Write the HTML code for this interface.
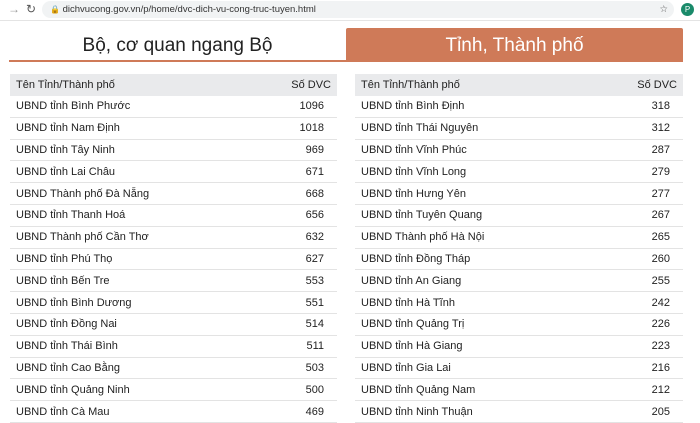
<!DOCTYPE html><html><head><meta charset="utf-8"><style>
body{margin:0;width:700px;height:420px;overflow:hidden;background:#fff;font-family:"Liberation Sans",sans-serif;}
.bar{position:absolute;left:0;top:0;width:700px;height:20px;background:#fff;border-bottom:1px solid #e4e4e4}
.addr{position:absolute;left:42px;top:1px;width:632px;height:17px;background:#f1f3f4;border-radius:9px;font-size:9.5px;color:#333;line-height:17px}
.tab{position:absolute;top:28px;height:34px;line-height:36px;text-align:center;font-size:19px}
.t1{left:9px;width:337px;color:#222;border-bottom:2px solid #cf7a58;height:32px}
.t2{left:346px;width:337px;background:#cf7a58;color:#fff;border-radius:2px 2px 0 0}
table{position:absolute;top:74px;border-collapse:collapse;font-size:11px;color:#222}
td{height:20.8px;border-bottom:1px solid #e3e3e3;padding:0 6px}
tr.h td{background:#e9eaec;border:none;height:22px}
td.n{text-align:right;padding-right:13px}
tr.h td.n{padding-right:6px}
</style></head><body>
<div class="bar"><span style="position:absolute;left:8px;top:2px;color:#999;font-size:12px">→</span><span style="position:absolute;left:26px;top:2px;color:#555;font-size:12px">↻</span>
<div class="addr"><span style="margin-left:8px;font-size:8px;color:#666">🔒</span> dichvucong.gov.vn/p/home/dvc-dich-vu-cong-truc-tuyen.html<span style="position:absolute;right:6px;color:#555">☆</span></div>
<div style="position:absolute;left:681px;top:3px;width:13px;height:13px;border-radius:50%;background:#1a8a6a;color:#fff;font-size:8px;text-align:center;line-height:13px">P</div></div>
<div class="tab t1">Bộ, cơ quan ngang Bộ</div>
<div class="tab t2">Tỉnh, Thành phố</div>
<table style="left:10px;width:327px">
<tr class="h"><td>Tên Tỉnh/Thành phố</td><td class="n">Số DVC</td></tr>
<tr><td>UBND tỉnh Bình Phước</td><td class="n">1096</td></tr>
<tr><td>UBND tỉnh Nam Định</td><td class="n">1018</td></tr>
<tr><td>UBND tỉnh Tây Ninh</td><td class="n">969</td></tr>
<tr><td>UBND tỉnh Lai Châu</td><td class="n">671</td></tr>
<tr><td>UBND Thành phố Đà Nẵng</td><td class="n">668</td></tr>
<tr><td>UBND tỉnh Thanh Hoá</td><td class="n">656</td></tr>
<tr><td>UBND Thành phố Cần Thơ</td><td class="n">632</td></tr>
<tr><td>UBND tỉnh Phú Thọ</td><td class="n">627</td></tr>
<tr><td>UBND tỉnh Bến Tre</td><td class="n">553</td></tr>
<tr><td>UBND tỉnh Bình Dương</td><td class="n">551</td></tr>
<tr><td>UBND tỉnh Đồng Nai</td><td class="n">514</td></tr>
<tr><td>UBND tỉnh Thái Bình</td><td class="n">511</td></tr>
<tr><td>UBND tỉnh Cao Bằng</td><td class="n">503</td></tr>
<tr><td>UBND tỉnh Quảng Ninh</td><td class="n">500</td></tr>
<tr><td>UBND tỉnh Cà Mau</td><td class="n">469</td></tr>
</table>
<table style="left:355px;width:328px">
<tr class="h"><td>Tên Tỉnh/Thành phố</td><td class="n">Số DVC</td></tr>
<tr><td>UBND tỉnh Bình Định</td><td class="n">318</td></tr>
<tr><td>UBND tỉnh Thái Nguyên</td><td class="n">312</td></tr>
<tr><td>UBND tỉnh Vĩnh Phúc</td><td class="n">287</td></tr>
<tr><td>UBND tỉnh Vĩnh Long</td><td class="n">279</td></tr>
<tr><td>UBND tỉnh Hưng Yên</td><td class="n">277</td></tr>
<tr><td>UBND tỉnh Tuyên Quang</td><td class="n">267</td></tr>
<tr><td>UBND Thành phố Hà Nội</td><td class="n">265</td></tr>
<tr><td>UBND tỉnh Đồng Tháp</td><td class="n">260</td></tr>
<tr><td>UBND tỉnh An Giang</td><td class="n">255</td></tr>
<tr><td>UBND tỉnh Hà Tĩnh</td><td class="n">242</td></tr>
<tr><td>UBND tỉnh Quảng Trị</td><td class="n">226</td></tr>
<tr><td>UBND tỉnh Hà Giang</td><td class="n">223</td></tr>
<tr><td>UBND tỉnh Gia Lai</td><td class="n">216</td></tr>
<tr><td>UBND tỉnh Quảng Nam</td><td class="n">212</td></tr>
<tr><td>UBND tỉnh Ninh Thuận</td><td class="n">205</td></tr>
</table>
</body></html>
